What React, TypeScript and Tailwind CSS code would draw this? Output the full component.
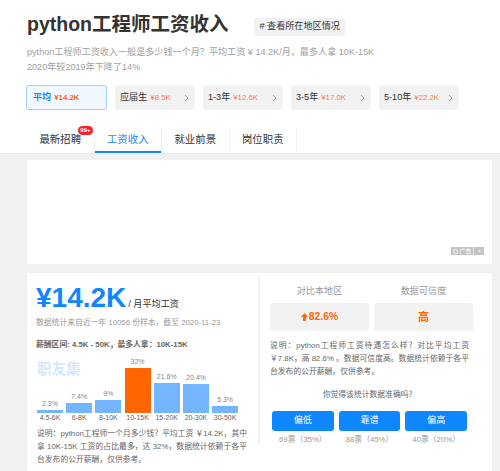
import React from "react";

const bars = [
  { label: "4.5-6K", pct: "2.3%", v: 2.3 },
  { label: "6-8K", pct: "7.4%", v: 7.4 },
  { label: "8-10K", pct: "9%", v: 9 },
  { label: "10-15K", pct: "32%", v: 32, hot: true },
  { label: "15-20K", pct: "21.6%", v: 21.6 },
  { label: "20-30K", pct: "20.4%", v: 20.4 },
  { label: "30-50K", pct: "5.3%", v: 5.3 },
];

const pills = [
  { label: "应届生", price: "¥8.5K" },
  { label: "1-3年", price: "¥12.6K" },
  { label: "3-5年", price: "¥17.0K" },
  { label: "5-10年", price: "¥22.2K" },
];

const tabs = ["最新招聘", "工资收入", "就业前景", "岗位职责"];

function Chevron() {
  return (
    <svg width="5" height="8" viewBox="0 0 5 8" className="ml-auto">
      <polyline points="1,1 4,4 1,7" fill="none" stroke="#a0a0a0" strokeWidth="1" />
    </svg>
  );
}

export default function App() {
  return (
    <div className="w-[500px] h-[471px] overflow-hidden bg-[#f1f1f1] text-[#333] [font-family:'Liberation_Sans','Noto_Sans_CJK_SC',sans-serif]">
      {/* top white area */}
      <div className="bg-white px-[27px] pt-[12px] border-b border-[#ebebeb]">
        <div className="flex items-center h-[24px]">
          <h1 className="text-[19.5px] font-bold leading-[24px] text-[#333] whitespace-nowrap">python工程师工资收入</h1>
          <span className="ml-[26px] mt-[6px] h-[18px] px-[5px] flex items-center bg-[#f2f2f2] rounded-[2px] text-[9.1px] text-[#333] whitespace-nowrap">
            # 查看所在地区情况
          </span>
        </div>
        <div className="mt-[8.5px] text-[9.1px] leading-[15px] text-[#a0a0a0] whitespace-nowrap">
          <div>python工程师工资收入一般是多少钱一个月？平均工资 ¥ 14.2K/月，最多人拿 10K-15K</div>
          <div>2020年较2019年下降了14%</div>
        </div>
        <div className="mt-[10.5px] flex gap-[8px] -ml-[1px]">
          <div className="w-[81px] h-[25px] rounded-[3px] border border-[#9fcdff] bg-[#f1f8ff] flex items-center pl-[6px] whitespace-nowrap">
            <span className="text-[9.1px] font-bold text-[#1a86f5]">平均</span>
            <span className="ml-[3px] text-[7.8px] font-bold text-[#ff5a1f]">¥14.2K</span>
          </div>
          {pills.map((p) => (
            <div key={p.label} className="w-[80px] h-[25px] rounded-[3px] bg-[#f2f2f2] flex items-center pl-[5px] pr-[6px] whitespace-nowrap">
              <span className="text-[9.1px] text-[#333]">{p.label}</span>
              <span className="ml-[3px] text-[7.8px] text-[#ff7a45]">{p.price}</span>
              <Chevron />
            </div>
          ))}
        </div>
        <div className="mt-[17px] flex h-[26px]">
          {tabs.map((t, i) => (
            <div
              key={t}
              className={
                i === 1
                  ? "relative w-[67.5px] flex items-center justify-center text-[10.4px] text-[#1a86f5] border-r border-[#f0f0f0]"
                  : "relative w-[67.5px] flex items-center justify-center text-[10.4px] text-[#333] border-r border-[#f3f3f3]"
              }
            >
              {t}
              {i === 0 && (
                <span className="absolute right-[1px] -top-[1px] h-[9px] px-[2px] rounded-full bg-[#f5222d] text-white text-[6px] leading-[9px] font-bold">
                  99+
                </span>
              )}
              {i === 1 && <span className="absolute left-0 right-0 bottom-0 h-[2px] bg-[#1a86f5]" />}
            </div>
          ))}
        </div>
      </div>

      {/* gray area */}
      <div className="pl-[27px] pr-[8px] pt-[6px]">
        <div className="relative h-[104px] bg-white">
          <div className="absolute right-[8px] bottom-[9px] h-[8px] flex items-center bg-[#c4c4c4] text-white text-[6px] leading-[8px]">
            <span className="flex items-center px-[2px]">
              <svg width="5" height="5" viewBox="0 0 5 5" className="mr-[1px]">
                <circle cx="2.5" cy="2.5" r="2.2" fill="none" stroke="#fff" strokeWidth="0.8" />
              </svg>
              广告
            </span>
            <span className="w-px h-[8px] bg-white/60" />
            <span className="px-[3px]">×</span>
          </div>
        </div>

        <div className="mt-[9px] bg-white flex h-[220px]">
          {/* left column */}
          <div className="w-[231px] pl-[9px] pt-[11px]">
            <div className="flex items-baseline whitespace-nowrap">
              <span className="text-[28px] font-bold leading-[28px] text-[#0d86ff]">¥14.2K</span>
              <span className="ml-[2px] text-[9.1px] text-[#333]">/ 月平均工资</span>
            </div>
            <div className="mt-[4px] text-[7.8px] leading-[14px] text-[#999] whitespace-nowrap">
              数据统计来自近一年 10056 份样本，截至 2020-11-23
            </div>
            <div className="mt-[8px] text-[7.8px] leading-[14px] font-bold text-[#666] whitespace-nowrap">
              薪酬区间: 4.5K - 50K，最多人拿：10K-15K
            </div>
            <div className="relative mt-[5px] ml-[1px] h-[56px] flex items-end gap-[3.2px]">
              <span className="absolute left-0 top-[4px] text-[14.5px] font-bold leading-[17px] text-[#d4e8ff]">职友集</span>
              {bars.map((b) => (
                <div key={b.label} className="relative w-[26px] flex flex-col items-center">
                  <span className="text-[7px] leading-[10px] text-[#888] whitespace-nowrap">{b.pct}</span>
                  <div
                    className={b.hot ? "mt-[1px] w-full bg-[#ff6600]" : "mt-[1px] w-full bg-[#74b5ff]"}
                    style={{ height: `${Math.round(b.v * 1.4)}px` }}
                  />
                </div>
              ))}
            </div>
            <div className="ml-[1px] flex gap-[3.2px]">
              {bars.map((b) => (
                <span key={b.label} className="w-[26px] text-center text-[7px] leading-[10px] text-[#666] whitespace-nowrap">
                  {b.label}
                </span>
              ))}
            </div>
            <div className="mt-[3.5px] ml-[1px] w-[210px] text-[7.8px] leading-[13px] text-[#666]">
              <div className="text-justify [text-align-last:justify] whitespace-nowrap">说明：python工程师一个月多少钱？平均工资 ￥14.2K，其中</div>
              <div className="text-justify [text-align-last:justify] whitespace-nowrap">拿 10K-15K 工资的占比最多，达 32%，数据统计依赖于各平</div>
              <div className="whitespace-nowrap">台发布的公开薪酬，仅供参考。</div>
            </div>
          </div>

          {/* right column */}
          <div className="flex-1 self-start mt-[3px] border-l-2 border-[#f2f2f2] pl-[10px] pr-[19px] pt-[8px]">
            <div className="grid grid-cols-2 gap-[5px] text-center text-[9.1px] leading-[14px] text-[#999]">
              <span>对比本地区</span>
              <span>数据可信度</span>
            </div>
            <div className="mt-[5px] grid grid-cols-2 gap-[5px]">
              <div className="h-[28px] rounded-[3px] bg-[#f2f2f2] flex items-center justify-center text-[#ff6600] font-bold text-[10.4px]">
                <svg width="7" height="8" viewBox="0 0 8 9" className="mr-[1px]">
                  <path d="M4 0 L8 4.5 H5.6 V9 H2.4 V4.5 H0 Z" fill="#ff6600" />
                </svg>
                82.6%
              </div>
              <div className="h-[28px] rounded-[3px] bg-[#f2f2f2] flex items-center justify-center text-[#ff6600] font-bold text-[11px]">
                高
              </div>
            </div>
            <div className="mt-[7.5px] w-[199px] text-[7.8px] leading-[13px] text-[#666]">
              <div className="text-justify [text-align-last:justify] whitespace-nowrap">说明：python工程师工资待遇怎么样？对比平均工资</div>
              <div className="text-justify [text-align-last:justify] whitespace-nowrap">￥7.8K，高 82.6% 。数据可信度高。数据统计依赖于各平</div>
              <div className="whitespace-nowrap">台发布的公开薪酬，仅供参考。</div>
            </div>
            <div className="w-[199px]">
              <div className="mt-[10px] text-center text-[7.8px] leading-[13px] text-[#666]">你觉得该统计数据准确吗？</div>
              <div className="mt-[10.5px] flex gap-[5px] px-[2px]">
                {["偏低", "靠谱", "偏高"].map((t) => (
                  <div key={t} className="w-[62px] h-[20px] rounded-[3px] bg-[#0d86ff] text-white text-[9.1px] flex items-center justify-center">
                    {t}
                  </div>
                ))}
              </div>
              <div className="mt-[2.5px] flex gap-[5px] px-[2px]">
                {["69票（35%）", "88票（45%）", "40票（20%）"].map((t) => (
                  <span key={t} className="w-[62px] text-center text-[7.8px] leading-[11px] text-[#999] whitespace-nowrap">
                    {t}
                  </span>
                ))}
              </div>
            </div>
          </div>
        </div>
      </div>
    </div>
  );
}
